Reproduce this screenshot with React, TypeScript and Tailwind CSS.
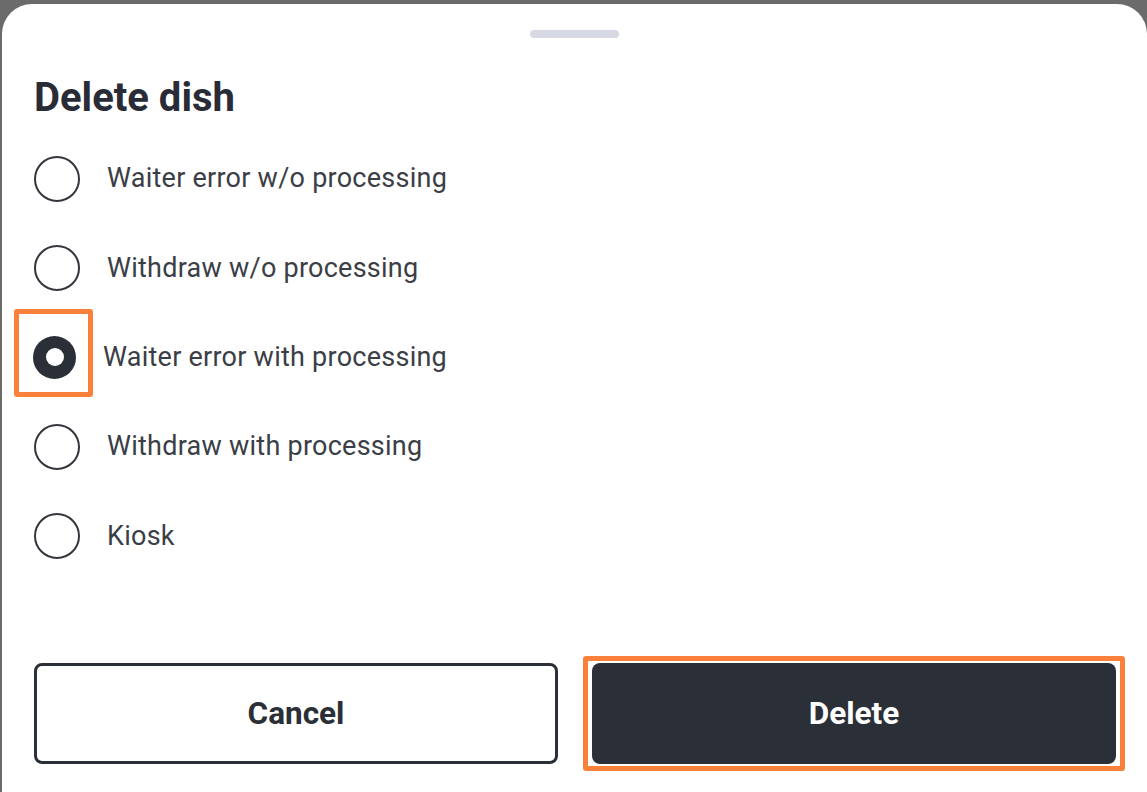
const options = [
  'Waiter error w/o processing',
  'Withdraw w/o processing',
  'Waiter error with processing',
  'Withdraw with processing',
  'Kiosk',
];

export default function App() {
  const selected = 2;

  return (
    <div
      className="w-[1147px] h-[792px] bg-[#6b6b6b] pl-[2px] pt-[4px] flex overflow-hidden"
      style={{ fontFamily: 'Roboto, "Liberation Sans", sans-serif' }}
    >
      <div className="flex-1 bg-white rounded-t-[30px] flex flex-col">
        {/* drag handle */}
        <div className="mt-[26px] mx-auto w-[89px] h-[8px] rounded-full bg-[#d6d9e4]" />

        <h1 className="mt-[37px] px-[32px] text-[40px] leading-[46px] font-bold text-[#292c36]">
          Delete dish
        </h1>

        <div className="mt-[13px] px-[32px] flex flex-col">
          {options.map((label, i) => (
            <div key={label} className="relative h-[89.3px] flex items-center">
              {i === selected ? (
                <>
                  <div className="absolute left-[-20px] top-[-4px] w-[79px] h-[88px] border-[5px] border-[#fa813b] rounded-[3px]" />
                  <div className="ml-[-1px] w-[43px] h-[43px] rounded-full bg-[#2b2f38] flex items-center justify-center">
                    <div className="w-[18px] h-[18px] rounded-full bg-white" />
                  </div>
                  <span className="ml-[27px] text-[27px] tracking-[0.25px] text-[#3b3e46]">{label}</span>
                </>
              ) : (
                <>
                  <div className="w-[46px] h-[46px] rounded-full border-[2.5px] border-[#33363d]" />
                  <span className="ml-[27px] text-[27px] tracking-[0.25px] text-[#3b3e46]">{label}</span>
                </>
              )}
            </div>
          ))}
        </div>

        <div className="mt-auto pl-[32px] pr-[31px] pb-[28px] grid grid-cols-2 gap-[34px]">
          <button className="h-[101px] rounded-[8px] border-[3px] border-[#2b2f38] bg-white text-[31.5px] font-bold text-[#2b2f38]">
            Cancel
          </button>
          <div className="relative">
            <div className="absolute left-[-9px] right-[-9px] top-[-7px] bottom-[-7px] border-[5px] border-[#fa813b] rounded-[3px]" />
            <button className="relative w-full h-[101px] rounded-[8px] bg-[#2b2f38] text-[31.5px] font-bold text-white">
              Delete
            </button>
          </div>
        </div>
      </div>
    </div>
  );
}
